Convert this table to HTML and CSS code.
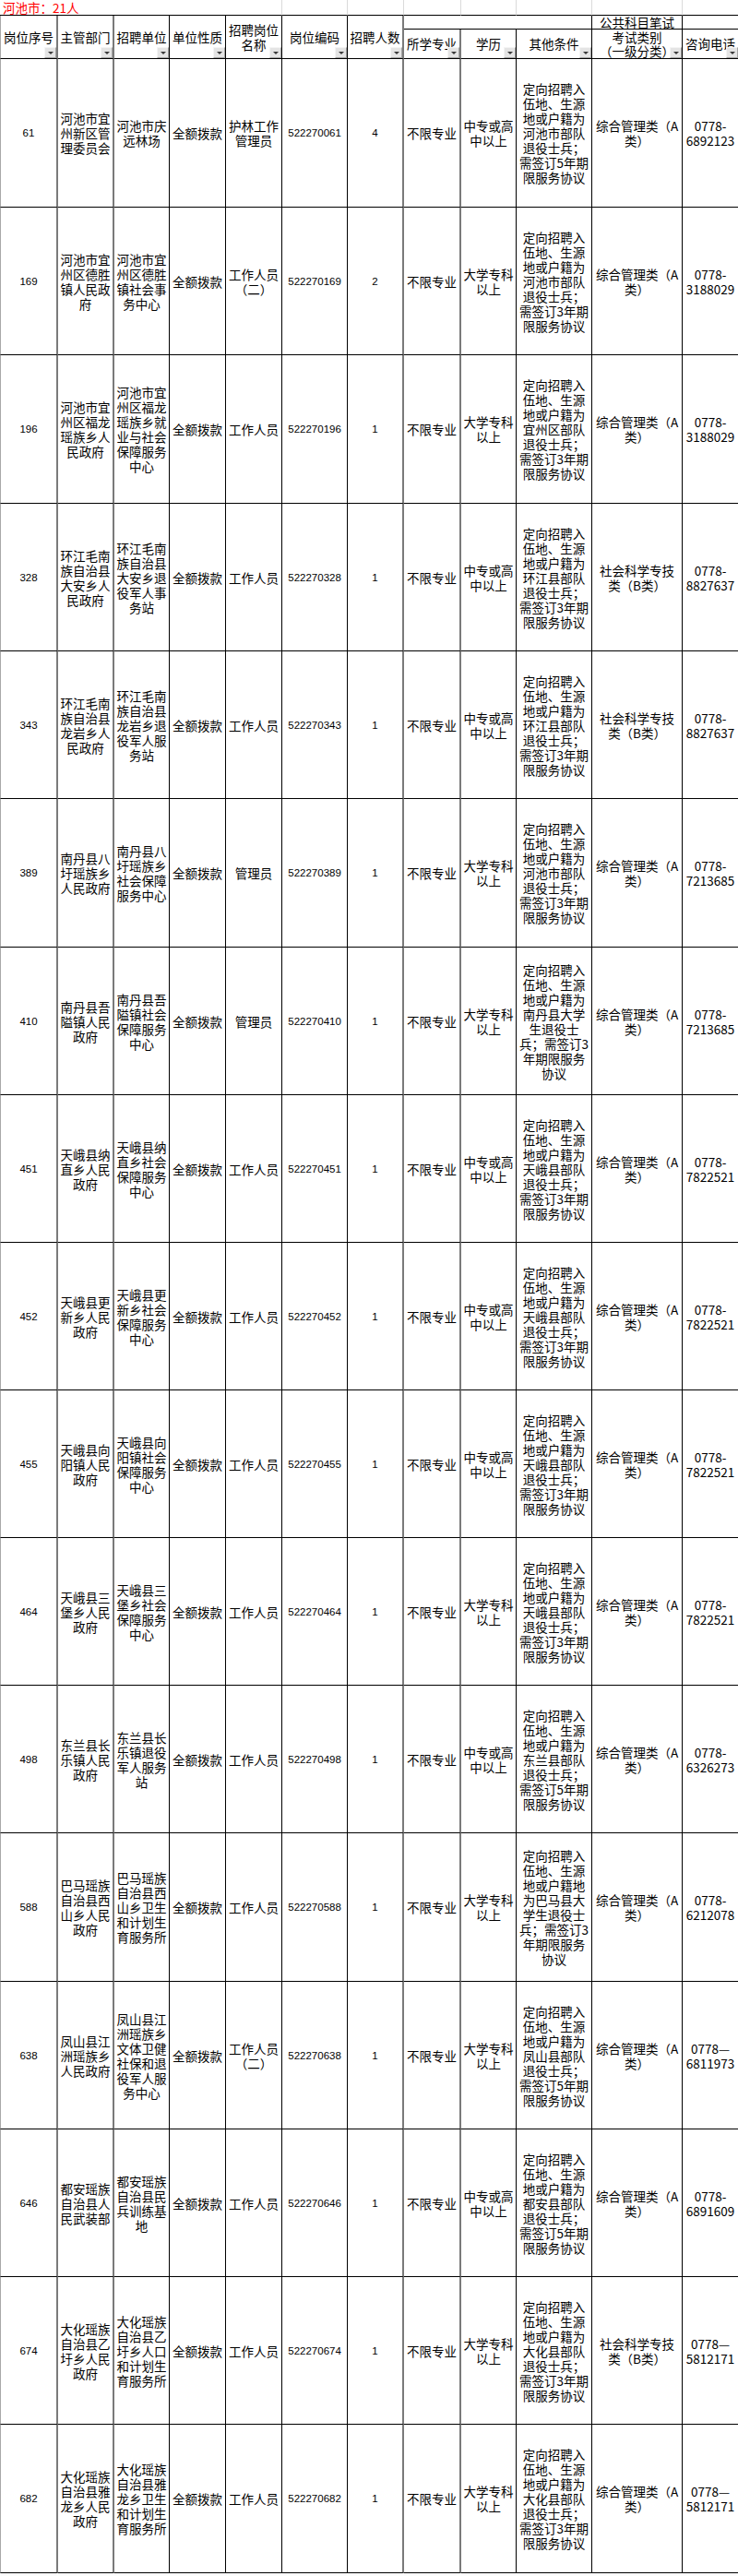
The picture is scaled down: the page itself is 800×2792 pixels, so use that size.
FILE: index.html
```html
<!DOCTYPE html>
<html lang="zh-CN">
<head>
<meta charset="utf-8">
<title>河池市：21人</title>
<link rel="stylesheet" href="styles.css">
</head>
<body>
<table class="sheet">
<colgroup>
<col class="w63"><col class="w61"><col class="w60"><col class="w61"><col class="w61"><col class="w71"><col class="w61"><col class="w62"><col class="w60"><col class="w82"><col class="w98"><col class="w60">
</colgroup>
<tr class="title">
<td colspan="5" class="caption">河池市：21人</td><td></td><td></td><td></td><td></td><td></td><td></td><td class="last"></td>
</tr>
<tr class="hb">
<td rowspan="2" class="hd g first">岗位序号<span class="flt"></span></td>
<td rowspan="2" class="hd g">主管部门<span class="flt"></span></td>
<td rowspan="2" class="hd">招聘单位<span class="flt"></span></td>
<td rowspan="2" class="hd">单位性质<span class="flt"></span></td>
<td rowspan="2" class="hd">招聘岗位名称<span class="flt"></span></td>
<td rowspan="2" class="hd">岗位编码<span class="flt"></span></td>
<td rowspan="2" class="hd g">招聘人数<span class="flt"></span></td>
<td colspan="3" class="top"></td>
<td class="top">公共科目笔试</td>
<td class="top last"></td>
</tr>
<tr class="hc">
<td class="hd g">所学专业<span class="flt"></span></td>
<td class="hd">学历<span class="flt"></span></td>
<td class="hd">其他条件<span class="flt"></span></td>
<td class="hd">考试类别<br>（一级分类）<span class="flt"></span></td>
<td class="hd last">咨询电话<span class="flt"></span></td>
</tr>

<tr class="t">
<td class="g n first">61</td><td class="g">河池市宜州新区管理委员会</td><td>河池市庆远林场</td><td>全额拨款</td><td>护林工作管理员</td><td class="n">522270061</td><td class="g n">4</td><td class="g">不限专业</td><td>中专或高中以上</td><td>定向招聘入伍地、生源地或户籍为河池市部队退役士兵；需签订5年期限服务协议</td><td>综合管理类（A类）</td><td class="last">0778-<br>6892123</td>
</tr>
<tr class="r">
<td class="g n first">169</td><td class="g">河池市宜州区德胜镇人民政府</td><td>河池市宜州区德胜镇社会事务中心</td><td>全额拨款</td><td>工作人员（二）</td><td class="n">522270169</td><td class="g n">2</td><td class="g">不限专业</td><td>大学专科以上</td><td>定向招聘入伍地、生源地或户籍为河池市部队退役士兵；需签订3年期限服务协议</td><td>综合管理类（A类）</td><td class="last">0778-<br>3188029</td>
</tr>
<tr class="t">
<td class="g n first">196</td><td class="g">河池市宜州区福龙瑶族乡人民政府</td><td>河池市宜州区福龙瑶族乡就业与社会保障服务中心</td><td>全额拨款</td><td>工作人员</td><td class="n">522270196</td><td class="g n">1</td><td class="g">不限专业</td><td>大学专科以上</td><td>定向招聘入伍地、生源地或户籍为宜州区部队退役士兵；需签订3年期限服务协议</td><td>综合管理类（A类）</td><td class="last">0778-<br>3188029</td>
</tr>
<tr class="r">
<td class="g n first">328</td><td class="g">环江毛南族自治县大安乡人民政府</td><td>环江毛南族自治县大安乡退役军人事务站</td><td>全额拨款</td><td>工作人员</td><td class="n">522270328</td><td class="g n">1</td><td class="g">不限专业</td><td>中专或高中以上</td><td>定向招聘入伍地、生源地或户籍为环江县部队退役士兵；需签订3年期限服务协议</td><td>社会科学专技类（B类）</td><td class="last">0778-<br>8827637</td>
</tr>
<tr class="r">
<td class="g n first">343</td><td class="g">环江毛南族自治县龙岩乡人民政府</td><td>环江毛南族自治县龙岩乡退役军人服务站</td><td>全额拨款</td><td>工作人员</td><td class="n">522270343</td><td class="g n">1</td><td class="g">不限专业</td><td>中专或高中以上</td><td>定向招聘入伍地、生源地或户籍为环江县部队退役士兵；需签订3年期限服务协议</td><td>社会科学专技类（B类）</td><td class="last">0778-<br>8827637</td>
</tr>
<tr class="t">
<td class="g n first">389</td><td class="g">南丹县八圩瑶族乡人民政府</td><td>南丹县八圩瑶族乡社会保障服务中心</td><td>全额拨款</td><td>管理员</td><td class="n">522270389</td><td class="g n">1</td><td class="g">不限专业</td><td>大学专科以上</td><td>定向招聘入伍地、生源地或户籍为河池市部队退役士兵；需签订3年期限服务协议</td><td>综合管理类（A类）</td><td class="last">0778-<br>7213685</td>
</tr>
<tr class="r">
<td class="g n first">410</td><td class="g">南丹县吾隘镇人民政府</td><td>南丹县吾隘镇社会保障服务中心</td><td>全额拨款</td><td>管理员</td><td class="n">522270410</td><td class="g n">1</td><td class="g">不限专业</td><td>大学专科以上</td><td>定向招聘入伍地、生源地或户籍为南丹县大学生退役士兵；需签订3年期限服务协议</td><td>综合管理类（A类）</td><td class="last">0778-<br>7213685</td>
</tr>
<tr class="r">
<td class="g n first">451</td><td class="g">天峨县纳直乡人民政府</td><td>天峨县纳直乡社会保障服务中心</td><td>全额拨款</td><td>工作人员</td><td class="n">522270451</td><td class="g n">1</td><td class="g">不限专业</td><td>中专或高中以上</td><td>定向招聘入伍地、生源地或户籍为天峨县部队退役士兵；需签订3年期限服务协议</td><td>综合管理类（A类）</td><td class="last">0778-<br>7822521</td>
</tr>
<tr class="r">
<td class="g n first">452</td><td class="g">天峨县更新乡人民政府</td><td>天峨县更新乡社会保障服务中心</td><td>全额拨款</td><td>工作人员</td><td class="n">522270452</td><td class="g n">1</td><td class="g">不限专业</td><td>中专或高中以上</td><td>定向招聘入伍地、生源地或户籍为天峨县部队退役士兵；需签订3年期限服务协议</td><td>综合管理类（A类）</td><td class="last">0778-<br>7822521</td>
</tr>
<tr class="r">
<td class="g n first">455</td><td class="g">天峨县向阳镇人民政府</td><td>天峨县向阳镇社会保障服务中心</td><td>全额拨款</td><td>工作人员</td><td class="n">522270455</td><td class="g n">1</td><td class="g">不限专业</td><td>中专或高中以上</td><td>定向招聘入伍地、生源地或户籍为天峨县部队退役士兵；需签订3年期限服务协议</td><td>综合管理类（A类）</td><td class="last">0778-<br>7822521</td>
</tr>
<tr class="r">
<td class="g n first">464</td><td class="g">天峨县三堡乡人民政府</td><td>天峨县三堡乡社会保障服务中心</td><td>全额拨款</td><td>工作人员</td><td class="n">522270464</td><td class="g n">1</td><td class="g">不限专业</td><td>大学专科以上</td><td>定向招聘入伍地、生源地或户籍为天峨县部队退役士兵；需签订3年期限服务协议</td><td>综合管理类（A类）</td><td class="last">0778-<br>7822521</td>
</tr>
<tr class="r">
<td class="g n first">498</td><td class="g">东兰县长乐镇人民政府</td><td>东兰县长乐镇退役军人服务站</td><td>全额拨款</td><td>工作人员</td><td class="n">522270498</td><td class="g n">1</td><td class="g">不限专业</td><td>中专或高中以上</td><td>定向招聘入伍地、生源地或户籍为东兰县部队退役士兵；需签订5年期限服务协议</td><td>综合管理类（A类）</td><td class="last">0778-<br>6326273</td>
</tr>
<tr class="t">
<td class="g n first">588</td><td class="g">巴马瑶族自治县西山乡人民政府</td><td>巴马瑶族自治县西山乡卫生和计划生育服务所</td><td>全额拨款</td><td>工作人员</td><td class="n">522270588</td><td class="g n">1</td><td class="g">不限专业</td><td>大学专科以上</td><td>定向招聘入伍地、生源地或户籍地为巴马县大学生退役士兵；需签订3年期限服务协议</td><td>综合管理类（A类）</td><td class="last">0778-<br>6212078</td>
</tr>
<tr class="r">
<td class="g n first">638</td><td class="g">凤山县江洲瑶族乡人民政府</td><td>凤山县江洲瑶族乡文体卫健社保和退役军人服务中心</td><td>全额拨款</td><td>工作人员（二）</td><td class="n">522270638</td><td class="g n">1</td><td class="g">不限专业</td><td>大学专科以上</td><td>定向招聘入伍地、生源地或户籍为凤山县部队退役士兵；需签订5年期限服务协议</td><td>综合管理类（A类）</td><td class="last">0778—<br>6811973</td>
</tr>
<tr class="r">
<td class="g n first">646</td><td class="g">都安瑶族自治县人民武装部</td><td>都安瑶族自治县民兵训练基地</td><td>全额拨款</td><td>工作人员</td><td class="n">522270646</td><td class="g n">1</td><td class="g">不限专业</td><td>中专或高中以上</td><td>定向招聘入伍地、生源地或户籍为都安县部队退役士兵；需签订5年期限服务协议</td><td>综合管理类（A类）</td><td class="last">0778-<br>6891609</td>
</tr>
<tr class="r">
<td class="g n first">674</td><td class="g">大化瑶族自治县乙圩乡人民政府</td><td>大化瑶族自治县乙圩乡人口和计划生育服务所</td><td>全额拨款</td><td>工作人员</td><td class="n">522270674</td><td class="g n">1</td><td class="g">不限专业</td><td>大学专科以上</td><td>定向招聘入伍地、生源地或户籍为大化县部队退役士兵；需签订3年期限服务协议</td><td>社会科学专技类（B类）</td><td class="last">0778—<br>5812171</td>
</tr>
<tr class="t">
<td class="g n first">682</td><td class="g">大化瑶族自治县雅龙乡人民政府</td><td>大化瑶族自治县雅龙乡卫生和计划生育服务所</td><td>全额拨款</td><td>工作人员</td><td class="n">522270682</td><td class="g n">1</td><td class="g">不限专业</td><td>大学专科以上</td><td>定向招聘入伍地、生源地或户籍为大化县部队退役士兵；需签订3年期限服务协议</td><td>综合管理类（A类）</td><td class="last">0778—<br>5812171</td>
</tr>
</table>
</body>
</html>
```

FILE: styles.css
```css
* { box-sizing: border-box; }

html, body {
  margin: 0;
  padding: 0;
  background: #fff;
  overflow-x: hidden;
}

.sheet {
  border-collapse: separate;
  border-spacing: 0;
  table-layout: fixed;
  width: 800px;
  font-family: "Noto Sans CJK SC", "Noto Sans", sans-serif;
  font-size: 13.5px;
  line-height: 16px;
  color: #000;
}

.w63 { width: 63px; }
.w61 { width: 61px; }
.w60 { width: 60px; }
.w62 { width: 62px; }
.w71 { width: 71px; }
.w82 { width: 82px; }
.w98 { width: 98px; }

.sheet td {
  padding: 0 2px;
  text-align: center;
  vertical-align: middle;
  border-right: 1px solid #000;
  border-bottom: 1px solid #000;
  overflow: hidden;
}

.sheet td.g { border-right: 2px solid #7a7a7a; }
.sheet td.first { border-left: 1px solid #a8a8a8; }
.sheet td.last { border-right: none; }

/* title row */
.title td {
  height: 17px;
  border-right: 1px solid #dadada;
  border-bottom: 1px solid #000;
}
.title td.last { border-right: none; }
.title td.caption {
  text-align: left;
  padding-left: 3px;
  color: #ff0000;
  white-space: nowrap;
  overflow: visible;
}

/* header */
.hb td.top {
  height: 15px;
  line-height: 14px;
  overflow: visible;
  white-space: nowrap;
}
.hc td {
  height: 32px;
  line-height: 15px;
  overflow: visible;
}
.sheet td.hd { position: relative; }

.flt {
  position: absolute;
  right: 0;
  bottom: 0;
  width: 13px;
  height: 12px;
  background: #e4e4e4;
  border: 1px solid #a4a4a4;
  border-top-color: #f4f4f4;
  border-left-color: #f4f4f4;
}
.flt::after {
  content: "";
  position: absolute;
  left: 3px;
  top: 4px;
  border-left: 3px solid transparent;
  border-right: 3px solid transparent;
  border-top: 3px solid #3a3a3a;
}

/* data rows */
.r td { height: 160px; }
.t td { height: 161px; }

.sheet td.n {
  font-family: "Liberation Sans", Arial, sans-serif;
  font-size: 11.5px;
}
```
